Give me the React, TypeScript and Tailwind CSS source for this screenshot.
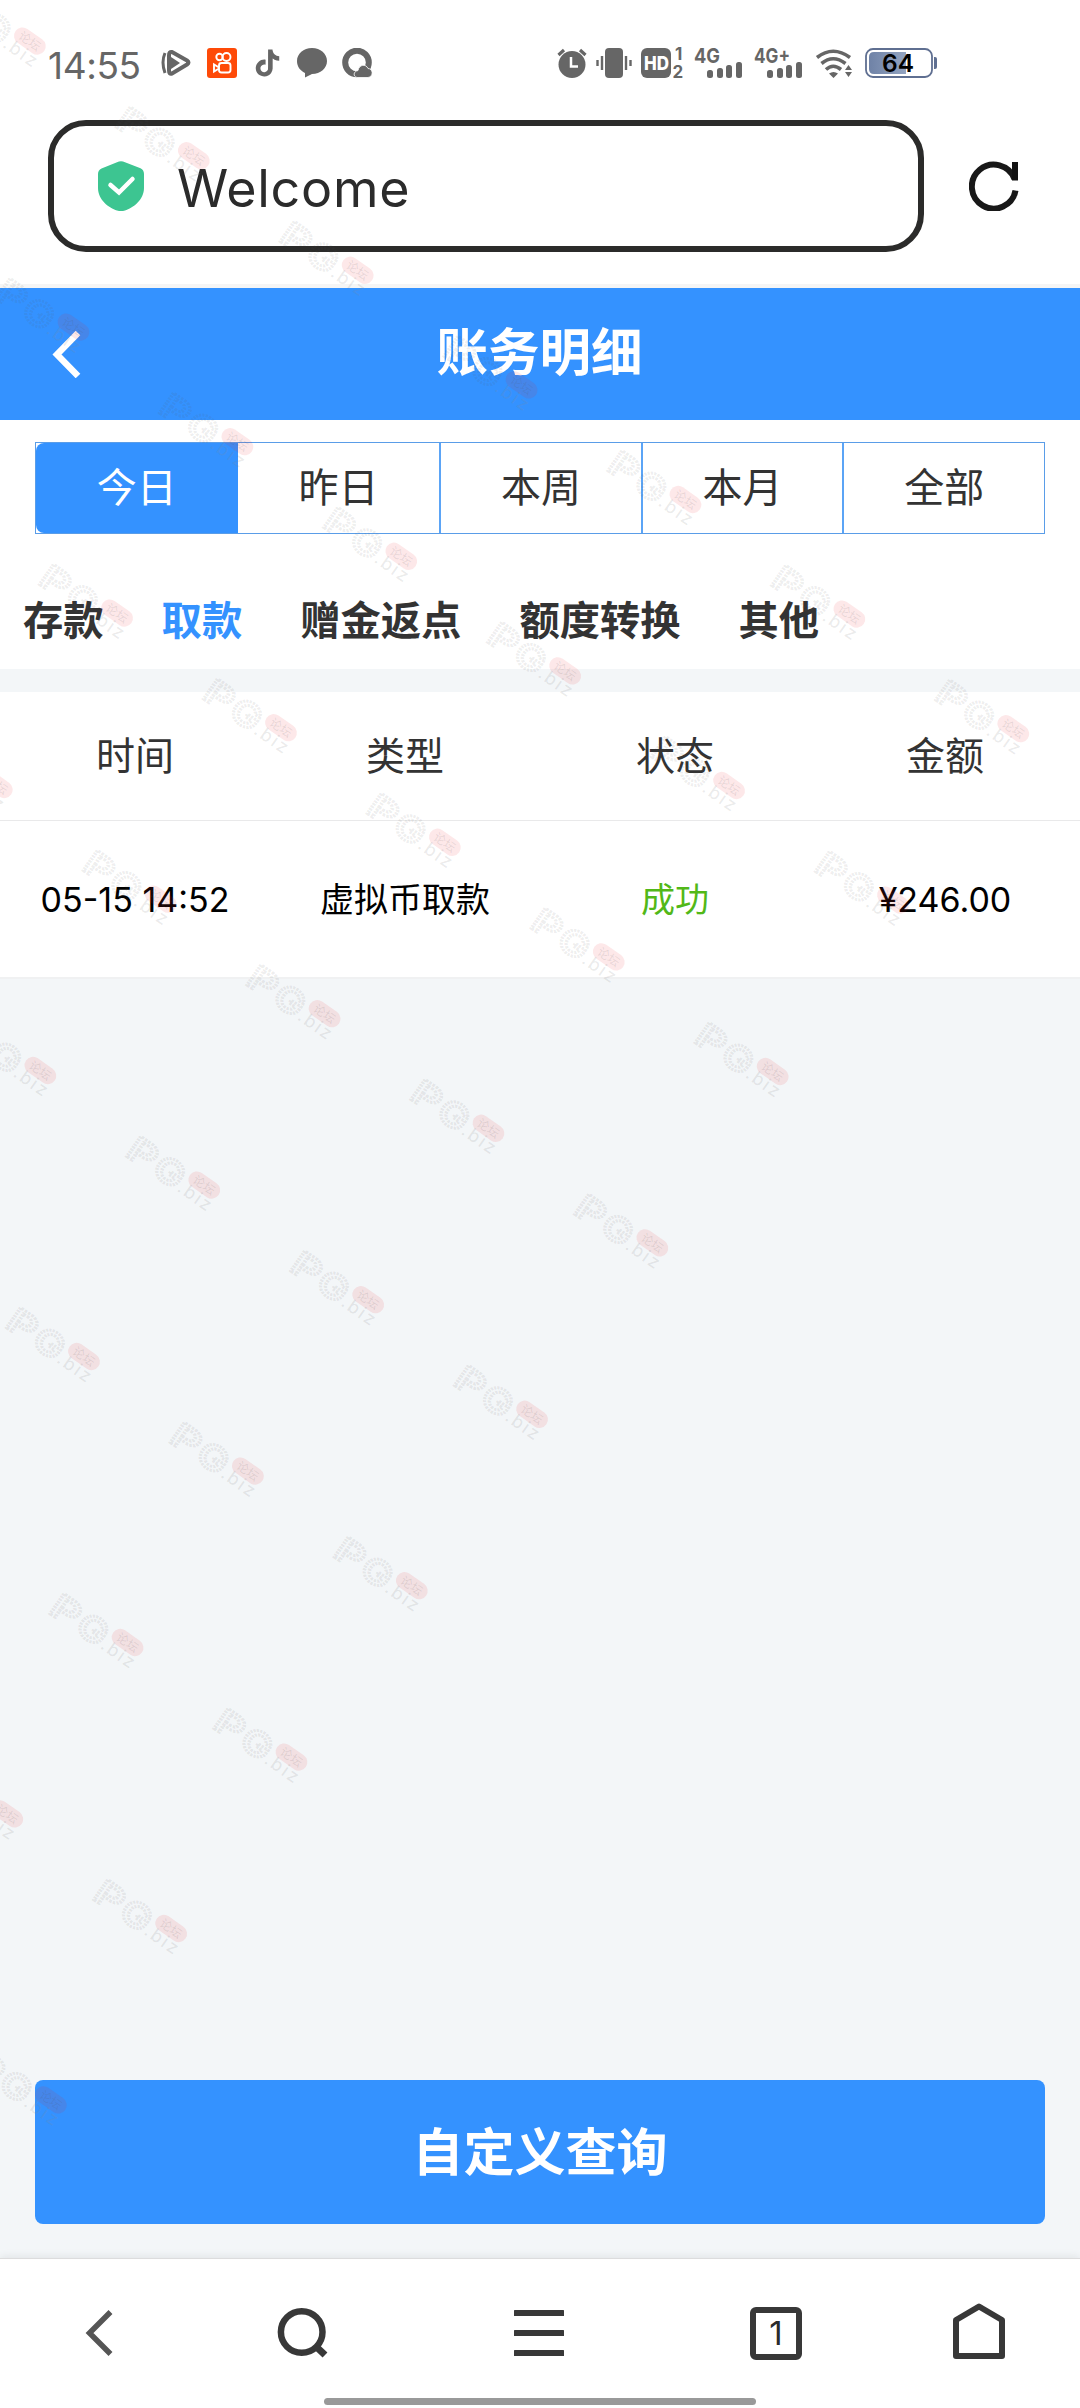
import React from "react";
import { clsx } from "clsx";
import { SiTiktok } from "react-icons/si";

const ranges = ["今日", "昨日", "本周", "本月", "全部"];
const categories = ["存款", "取款", "赠金返点", "额度转换", "其他"];
const columns = ["时间", "类型", "状态", "金额"];

const records = [
  {
    time: "05-15 14:52",
    type: "虚拟币取款",
    status: "成功",
    amount: "¥246.00",
  },
];

// stamps repeat along two directions, cut off at the lower right
const stamps: { x: number; y: number }[] = [];
for (let j = -2; j <= 6; j++) {
  for (let i = -2; i + j <= 4; i++) {
    const x = 38.6 + 163.9 * i + 43.6 * j;
    const y = 563 + 114.6 * i + 286 * j;
    if (x > -95 && y > -60) stamps.push({ x, y });
  }
}

function Watermark() {
  return (
    <svg
      className="absolute inset-0 pointer-events-none"
      width="1080"
      height="2408"
      viewBox="0 0 1080 2408"
    >
      {stamps.map(({ x, y }, i) => (
        <g key={i} transform={`translate(${x} ${y}) rotate(35)`}>
          <g
            fill="none"
            stroke="#555"
            strokeOpacity="0.1"
            strokeWidth="3"
            strokeDasharray="2 1"
            fontFamily="Inter, sans-serif"
            fontWeight="600"
            fontSize="34"
          >
            <text x="10" y="17" textLength="29" lengthAdjust="spacingAndGlyphs">
              P
            </text>
            <text x="42" y="17" textLength="30" lengthAdjust="spacingAndGlyphs">
              G
            </text>
          </g>
          <rect
            x="75.5"
            y="-12.5"
            width="35"
            height="17"
            rx="8.5"
            fill="#e8202c"
            fillOpacity="0.1"
          />
          <text
            x="93"
            y="0.5"
            textAnchor="middle"
            fontFamily="'Noto Sans CJK SC', sans-serif"
            fontSize="12"
            fill="#555"
            fillOpacity="0.14"
          >
            论坛
          </text>
          <text
            x="73"
            y="16.5"
            textLength="37"
            fontFamily="Inter, sans-serif"
            fontSize="18"
            fill="#888"
            fillOpacity="0.18"
          >
            .biz
          </text>
        </g>
      ))}
    </svg>
  );
}

function Signal({ label }: { label: string }) {
  return (
    <svg className="overflow-visible" width="48" height="30" viewBox="0 0 48 30" fill="#666">
      <text
        x="-1"
        y="15"
        fontSize="20"
        fontWeight="700"
        fontFamily="Inter, sans-serif"
        textLength={label.length > 2 ? 36 : 26}
        lengthAdjust="spacingAndGlyphs"
      >
        {label}
      </text>
      <rect x="12" y="22" width="6" height="8" rx="2.5" />
      <rect x="22" y="20" width="6" height="10" rx="2.5" />
      <rect x="31" y="17" width="6" height="13" rx="2.5" />
      <rect x="41" y="14" width="6" height="16" rx="2.5" />
    </svg>
  );
}

function StatusBar() {
  return (
    <div className="flex h-[120px] items-start pt-12 pl-12 text-[#666]">
      <span className="w-[113px] whitespace-nowrap text-[37px] leading-[35px] tracking-[-0.4px]">
        14:55
      </span>
      <div className="flex w-[396px] items-center gap-[15px]">
        <svg width="31" height="30" viewBox="0 0 31 30">
          <path
            d="M11 4 26 12.500q3 2 0 4L11 25.500q-3 1-3-3v-15q0-4 3-3.500Z"
            fill="none"
            stroke="#666"
            strokeWidth="4"
            strokeLinejoin="round"
          />
          <path d="M4 5Q0 14 4 25" fill="none" stroke="#666" strokeWidth="3" />
          <path d="M10 9 19 15l-9 6Z" fill="#666" />
        </svg>
        <svg width="30" height="30" viewBox="0 0 30 30">
          <rect width="30" height="30" rx="3" fill="#fe4a08" />
          <g fill="none" stroke="#fff" strokeWidth="1.9">
            <circle cx="12.500" cy="9" r="3.200" />
            <circle cx="19.500" cy="9" r="4" />
            <rect x="12" y="15" width="11.500" height="9.500" rx="2.500" />
            <path d="M12 19.500 7 16.500v7l5-3" />
          </g>
        </svg>
        <SiTiktok className="ml-[2px] mr-[1px] h-[30px] w-[27px]" />
        <svg width="30" height="30" viewBox="0 0 30 30" fill="#666">
          <path d="M15 0c8.500 0 15 5.800 15 13s-6.500 13-15 13L8 29.500V25C3 22.500 0 18.500 0 13 0 5.800 6.500 0 15 0Z" />
        </svg>
        <svg width="31" height="30" viewBox="0 0 31 30">
          <circle cx="15" cy="14.500" r="11.800" fill="none" stroke="#666" strokeWidth="6" />
          <path
            d="M15 29.500c-4-1-4-6 1-7 1-6 8-7 10-2 5 0 6 8 0 9Z"
            fill="#666"
            stroke="#fff"
            strokeWidth=".8"
          />
        </svg>
      </div>
      <div className="flex">
        {/* alarm */}
        <svg width="30" height="30" viewBox="0 0 30 30">
          <circle cx="15" cy="16.500" r="13.500" fill="#666" />
          <path d="M1.500 7 7 2M28.500 7 23 2" stroke="#666" strokeWidth="3.200" />
          <path d="M14 9v9.500h7" fill="none" stroke="#fff" strokeWidth="2.500" />
        </svg>
        {/* vibrate */}
        <svg className="ml-[9px]" width="36" height="30" viewBox="0 0 36 30">
          <rect x="9" width="18" height="30" rx="4" fill="#666" />
          <path
            d="M1.500 12v6M6 8v14M34.500 12v6M30 8v14"
            stroke="#666"
            strokeWidth="2.400"
          />
        </svg>
        <svg
          className="ml-[9px] overflow-visible"
          width="44"
          height="30"
          viewBox="0 0 44 30"
        >
          <rect width="30" height="30" rx="6" fill="#666" />
          <g fontFamily="Inter, sans-serif" fontWeight="700" fill="#666">
            <text
              x="3"
              y="22"
              fontSize="19"
              fontWeight="800"
              fill="#fff"
              textLength="25"
              lengthAdjust="spacingAndGlyphs"
            >
              HD
            </text>
            <text x="34" y="12" fontSize="17">
              1
            </text>
            <text x="31.500" y="29.500" fontSize="17">
              2
            </text>
          </g>
        </svg>
        <div className="ml-[10px] flex gap-3">
          <Signal label="4G" />
          <Signal label="4G+" />
        </div>
        <svg className="ml-3" width="38" height="30" viewBox="0 0 38 30">
          <g fill="none" stroke="#666" strokeWidth="3.600">
            <path d="M2 9.500Q18 -3 35 9.500" />
            <path d="M6.500 15.500Q18 6 30.500 15.500" />
            <path d="M11 21.500Q18 15 26 21.500" />
          </g>
          <path
            d="M14 25.500q4.500-3 9 0L18.500 30ZM30 22l3.500-5 3.500 5ZM30 24l3.500 5 3.500-5Z"
            fill="#666"
          />
        </svg>
        <svg className="ml-[12px]" width="73" height="30" viewBox="0 0 73 30">
          <defs>
            <linearGradient id="charge">
              <stop offset="0" stopColor="#6f82a6" />
              <stop offset="1" stopColor="#93a4c1" />
            </linearGradient>
          </defs>
          <rect
            x="1"
            y="1"
            width="66"
            height="28"
            rx="7"
            fill="#fff"
            stroke="#5f6f91"
            strokeWidth="1.800"
          />
          <path d="M9 4h32v22H9q-5 0-5-5V9q0-5 5-5Z" fill="url(#charge)" />
          <path d="M69 9h1q2 0 2 2v8q0 2-2 2h-1Z" fill="#5f6f91" />
          <text
            x="33"
            y="24"
            textAnchor="middle"
            fontFamily="Inter, sans-serif"
            fontWeight="600"
            fontSize="24.500"
            fill="#000"
          >
            64
          </text>
        </svg>
      </div>
    </div>
  );
}

function AddressBar() {
  return (
    <div className="flex h-[168px] items-start border-b-4 border-[#f5f5f5] pl-12">
      <div className="flex h-[132px] w-[876px] items-center rounded-[38px] border-6 border-[#2b2b2a] pl-11">
        <svg width="46" height="50" viewBox="0 0 46 50">
          <path
            d="M19 1.200q4-2 8 0l15.500 6Q46 9 46 13v14c0 12-11 20-19 22.500q-4 1-8 0C11 47 0 39 0 27V13q0-4 3.500-5.500Z"
            fill="#3dc591"
          />
          <path
            d="M12.500 24 21 31.500 34.500 18"
            fill="none"
            stroke="#fff"
            strokeWidth="4.500"
            strokeLinecap="round"
          />
        </svg>
        <span className="mt-[5px] ml-[33px] text-[52px] leading-none tracking-[0.7px] text-[#2b2b2b]">
          Welcome
        </span>
      </div>
      <svg className="mt-[41px] ml-[45px]" width="50" height="50" viewBox="0 0 50 50">
        <path
          d="M46.500 29.500A22 22 0 1 1 45.500 18"
          fill="none"
          stroke="#181818"
          strokeWidth="6"
        />
        <path d="M46 1v18.500" stroke="#111" strokeWidth="6" />
      </svg>
    </div>
  );
}

function BottomBar() {
  return (
    <nav className="relative flex h-[150px] border-t border-[#dcdcdd] bg-white shadow-[0_-2px_8px_rgba(0,0,0,0.07)]">
      <svg className="mt-[43px] ml-[74px]" width="52" height="60" viewBox="0 0 52 60">
        <path d="M36.500 10 15.500 31l21 21" fill="none" stroke="#555" strokeWidth="5.500" />
      </svg>
      <svg className="mt-[43px] ml-[148px]" width="60" height="60" viewBox="0 0 60 60">
        <circle cx="27.700" cy="30" r="20.800" fill="none" stroke="#383838" strokeWidth="6.500" />
        <path d="M42 44.500 51 53" stroke="#383838" strokeWidth="7" />
      </svg>
      <svg
        className="mt-[43px] ml-[180px]"
        width="50"
        height="60"
        viewBox="0 0 50 60"
        fill="#383838"
      >
        <rect y="8" width="50" height="6" rx=".5" />
        <rect y="28" width="50" height="6" rx=".5" />
        <rect y="48" width="50" height="6" rx=".5" />
      </svg>
      <span className="mt-12 ml-[186px] flex h-[53px] w-[52px] items-center justify-center rounded-md border-6 border-[#383838] text-[33px] leading-none text-[#2b2b2b]">
        1
      </span>
      <svg className="mt-[43px] ml-[151px]" width="52" height="60" viewBox="0 0 52 60">
        <path
          d="M3 18 26 4.500 49 18V54H3Z"
          fill="none"
          stroke="#383838"
          strokeWidth="6"
          strokeLinejoin="round"
        />
      </svg>
      <div className="absolute bottom-[3px] left-[324px] h-[7px] w-[432px] rounded-full bg-[#999]" />
    </nav>
  );
}

export default function App() {
  return (
    <div className="relative flex h-[2408px] w-[1080px] flex-col overflow-hidden bg-white font-['Inter','Noto_Sans_CJK_SC',sans-serif]">
      <StatusBar />
      <AddressBar />

      {/* Page header */}
      <header className="flex h-[132px] items-center bg-[#3492ff]">
        <svg className="ml-[50px] w-[32px]" height="48" viewBox="0 0 32 48">
          <path d="M28 3 7 24.500 28 46" fill="none" stroke="#fff" strokeWidth="6.500" />
        </svg>
        <h1 className="mr-[83px] mb-[2px] flex-1 text-center text-[51.500px] leading-none font-bold text-white">
          账务明细
        </h1>
      </header>

      <div className="px-[35px] pt-[22px]">
        <div className="flex h-[92px] border border-[#5a9de8]">
          {ranges.map((label, i) => (
            <button
              key={label}
              className={clsx(
                "w-[202px] text-[40px] leading-none",
                i === 0
                  ? "rounded-l-lg bg-[#3492ff] text-white"
                  : "text-[#333]",
                i > 1 && "border-l-2 border-[#5ba4f6]"
              )}
            >
              {label}
            </button>
          ))}
        </div>
      </div>

      <div className="flex h-[135px] items-center gap-[58px] pt-[39px] pl-[23px]">
        {categories.map((label) => (
          <button
            key={label}
            className={clsx(
              "text-[40.300px] leading-none font-bold whitespace-nowrap",
              label === "取款" ? "text-[#3492ff]" : "text-[#333]"
            )}
          >
            {label}
          </button>
        ))}
      </div>
      <div className="h-[23px] bg-[#f3f6f8]" />

      {/* Records */}
      <div className="grid h-[129px] grid-cols-4 items-center border-b border-[#e9e9ea] text-center text-[39px] text-[#333]">
        {columns.map((label) => (
          <span key={label}>{label}</span>
        ))}
      </div>
      {records.map((r) => (
        <div
          key={r.time}
          className="grid h-[158px] grid-cols-4 items-center border-b-2 border-[#f0f1f2] text-center text-[34px] text-black"
        >
          <span>{r.time}</span>
          <span>{r.type}</span>
          <span className="text-[#52b818]">{r.status}</span>
          <span>{r.amount}</span>
        </div>
      ))}

      <div className="flex flex-1 flex-col justify-end bg-[#f3f6f8] px-[35px] pb-[34px]">
        <button className="h-[144px] rounded-lg bg-[#3492ff] text-[51px] leading-none font-bold text-white">
          自定义查询
        </button>
      </div>

      <BottomBar />
      <Watermark />
    </div>
  );
}
